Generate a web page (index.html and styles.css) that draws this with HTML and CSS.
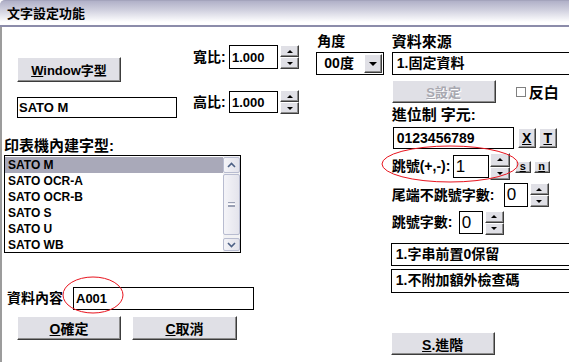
FILE: index.html
```html
<!DOCTYPE html>
<html lang="zh-Hant">
<head>
    <meta charset="UTF-8">
    <meta name="viewport" content="width=device-width, initial-scale=1.0">
    <title>文字設定功能</title>
    <link rel="stylesheet" href="styles.css">
</head>
<body>
    <div class="window">
        <div class="titlebar">文字設定功能</div>
        <div class="client">
            <div class="col-left">
                <div class="top-row">
                    <div class="font-col">
                        <button class="btn btn-window"><u>W</u>indow字型</button>
                        <div class="textbox tb-font">SATO M</div>
                    </div>
                    <div class="ratio-col">
                        <div class="ratio-row">
                            <span class="label ratio-label">寬比:</span>
                            <div class="textbox tb-ratio">1.000</div>
                            <div class="spin"><span class="spin-btn up"></span><span class="spin-btn down"></span></div>
                        </div>
                        <div class="ratio-row second">
                            <span class="label ratio-label">高比:</span>
                            <div class="textbox tb-ratio">1.000</div>
                            <div class="spin"><span class="spin-btn up"></span><span class="spin-btn down"></span></div>
                        </div>
                    </div>
                </div>

                <div class="label label-big list-label">印表機內建字型:</div>
                <div class="listbox">
                    <div class="list-items">
                        <div class="item selected">SATO M</div>
                        <div class="item">SATO OCR-A</div>
                        <div class="item">SATO OCR-B</div>
                        <div class="item">SATO S</div>
                        <div class="item">SATO U</div>
                        <div class="item">SATO WB</div>
                    </div>
                    <div class="scrollbar">
                        <span class="sb-btn">
                            <svg width="9" height="6" viewBox="0 0 9 6"><polyline points="1,5 4.5,1.5 8,5" fill="none" stroke="#4d6185" stroke-width="1.6"/></svg>
                        </span>
                        <span class="sb-thumb"><span class="grip"></span></span>
                        <span class="sb-track"></span>
                        <span class="sb-btn">
                            <svg width="9" height="6" viewBox="0 0 9 6"><polyline points="1,1 4.5,4.5 8,1" fill="none" stroke="#4d6185" stroke-width="1.6"/></svg>
                        </span>
                    </div>
                </div>

                <div class="data-row">
                    <span class="label data-label">資料內容</span>
                    <div class="textbox tb-data">A001</div>
                </div>
                <div class="action-row">
                    <button class="btn btn-action btn-ok"><u>O</u>確定</button>
                    <button class="btn btn-action btn-cancel"><u>C</u>取消</button>
                </div>
            </div>

            <div class="col-angle">
                <div class="label angle-label">角度</div>
                <div class="select">
                    <span class="select-text">00度</span>
                    <span class="select-arrow"></span>
                </div>
            </div>

            <div class="col-right">
                <div class="label label-big">資料來源</div>
                <div class="combo">1.固定資料</div>
                <div class="flex-row setting-row">
                    <button class="btn btn-disabled"><u>S</u>設定</button>
                    <span class="checkbox"></span>
                    <span class="check-label">反白</span>
                </div>
                <div class="label label-big carry-label">進位制 字元:</div>
                <div class="flex-row chars-row">
                    <div class="textbox tb-chars">0123456789</div>
                    <button class="btn btn-mini btn-x"><u>X</u></button>
                    <button class="btn btn-mini btn-t"><u>T</u></button>
                </div>
                <div class="flex-row step-row">
                    <span class="label step-label">跳號(+,-):</span>
                    <div class="textbox tb-num tb-step">1</div>
                    <div class="spin spin-tall"><span class="spin-btn up"></span><span class="spin-btn down"></span></div>
                    <button class="btn btn-tiny btn-s"><u>s</u></button>
                    <button class="btn btn-tiny btn-n"><u>n</u></button>
                </div>
                <div class="flex-row tail-row">
                    <span class="label tail-label">尾端不跳號字數:</span>
                    <div class="textbox tb-num tb-small">0</div>
                    <div class="spin"><span class="spin-btn up"></span><span class="spin-btn down"></span></div>
                </div>
                <div class="flex-row count-row">
                    <span class="label count-label">跳號字數:</span>
                    <div class="textbox tb-num tb-small">0</div>
                    <div class="spin"><span class="spin-btn up"></span><span class="spin-btn down"></span></div>
                </div>
                <div class="combo combo-lead">1.字串前置0保留</div>
                <div class="combo combo-check">1.不附加額外檢查碼</div>
                <button class="btn btn-action btn-advanced"><u>S</u>.進階</button>
            </div>
        </div>

        <svg class="marks" width="580" height="362" viewBox="0 0 580 362">
            <ellipse cx="450" cy="164" rx="68" ry="18" fill="none" stroke="#e8141e" stroke-width="1"/>
            <ellipse cx="93" cy="295" rx="30" ry="18" fill="none" stroke="#e8141e" stroke-width="1"/>
        </svg>
    </div>
</body>
</html>
```

FILE: styles.css
```css
* {
    box-sizing: border-box;
}

body {
    margin: 0;
    background: #fff;
    font-family: "Liberation Sans", "Noto Sans CJK TC", sans-serif;
    font-weight: bold;
    color: #000;
    overflow: hidden;
}

.window {
    position: relative;
    width: 580px;
    height: 362px;
    overflow: hidden;
}

.titlebar {
    height: 27px;
    padding: 4px 0 0 7px;
    font-size: 13px;
    line-height: 17px;
    background: linear-gradient(#b0b0c8 0%, #d2d2e0 40%, #ffffff 88%);
    border-top: 1px solid #a4a4bc;
    border-bottom: 2px solid #8c8caa;
    border-top-left-radius: 5px;
}

.client {
    display: flex;
    height: 335px;
    border-left: 2px solid #9c9c9c;
}

/* shared controls */
.label {
    font-size: 14px;
    line-height: 17px;
    white-space: nowrap;
}

.label-big {
    font-size: 15px;
}

.btn {
    font: inherit;
    padding: 0;
    color: #000;
    background: #e0e0e6;
    border: 1px solid;
    border-color: #fff #3c3c3c #3c3c3c #fff;
    box-shadow: inset -1px -1px #8c8c8c;
}

.textbox {
    background: #fff;
    border: 1px solid #000;
    white-space: nowrap;
    overflow: hidden;
}

.spin {
    display: flex;
    flex-direction: column;
    width: 19px;
    height: 24px;
    margin-left: 2px;
}

.spin-btn {
    flex: 1;
    display: flex;
    align-items: center;
    justify-content: center;
    background: #e0e0e6;
    border: 1px solid;
    border-color: #fff #3c3c3c #3c3c3c #fff;
    box-shadow: inset -1px -1px #8c8c8c;
}

.spin-btn::before {
    content: "";
    border-left: 3px solid transparent;
    border-right: 3px solid transparent;
}

.spin-btn.up::before {
    border-bottom: 3px solid #000;
}

.spin-btn.down::before {
    border-top: 3px solid #000;
}

.flex-row {
    display: flex;
    align-items: center;
}

/* left column */
.col-left {
    width: 300px;
    margin-left: 2px;
}

.top-row {
    display: flex;
    height: 90px;
}

.font-col {
    width: 160px;
    margin-left: 13px;
    padding-top: 30px;
}

.btn-window {
    display: block;
    width: 104px;
    height: 25px;
    font-size: 13px;
}

.tb-font {
    margin-top: 15px;
    width: 160px;
    height: 21px;
    padding-left: 1px;
    font-size: 13px;
    line-height: 19px;
}

.ratio-col {
    margin-left: 16px;
    padding-top: 18px;
}

.ratio-row {
    display: flex;
    align-items: center;
    height: 24px;
}

.ratio-row.second {
    margin-top: 22px;
    height: 22px;
}

.ratio-label {
    width: 36px;
}

.tb-ratio {
    width: 49px;
    height: 100%;
    padding-left: 2px;
    font-size: 13px;
    display: flex;
    align-items: center;
}

.list-label {
    margin-top: 20px;
}

.listbox {
    display: flex;
    margin-top: 1px;
    width: 237px;
    height: 98px;
    border: 1px solid #000;
}

.list-items {
    flex: 1;
    padding-top: 1px;
}

.item {
    height: 16px;
    padding-left: 3px;
    font-size: 12px;
    line-height: 16px;
}

.item.selected {
    background: #a9a9b9;
}

.scrollbar {
    display: flex;
    flex-direction: column;
    width: 17px;
    padding: 1px 0;
    background: #f2f2f4;
}

.sb-btn {
    height: 16px;
    display: flex;
    align-items: center;
    justify-content: center;
    background: linear-gradient(90deg, #f4f4f8, #e2e2ea);
    border: 1px solid #b8bcd0;
    border-radius: 2px;
}

.sb-btn:last-child {
    height: 13px;
}

.sb-thumb {
    height: 61px;
    margin-top: 1px;
    display: flex;
    align-items: center;
    justify-content: center;
    background: linear-gradient(90deg, #f4f4f8, #e4e4ec);
    border: 1px solid #b8bcd0;
    border-radius: 2px;
}

.grip {
    width: 7px;
    height: 5px;
    border-top: 1px solid #9aa0b4;
    border-bottom: 1px solid #9aa0b4;
    background: linear-gradient(#fff 0 1px, #9aa0b4 1px 2px, transparent 2px);
    background-position: 0 1px;
    background-repeat: no-repeat;
}

.sb-track {
    flex: 1;
}

.data-row {
    display: flex;
    align-items: center;
    margin-top: 34px;
    height: 23px;
}

.data-label {
    width: 66px;
    margin-left: 3px;
}

.tb-data {
    width: 181px;
    height: 23px;
    padding-left: 2px;
    font-size: 13px;
    line-height: 21px;
}

.action-row {
    display: flex;
    margin-top: 6px;
}

.btn-action {
    width: 104px;
    height: 24px;
    font-size: 14px;
}

.btn-ok {
    margin-left: 13px;
}

.btn-cancel {
    margin-left: 11px;
    width: 105px;
}

/* angle column */
.col-angle {
    width: 68px;
    margin-left: 15px;
    padding-top: 6px;
}

.angle-label {
    padding-left: 1px;
}

.select {
    display: flex;
    margin-top: 2px;
    height: 23px;
    border: 1px solid #000;
    background: #fff;
}

.select-text {
    flex: 1;
    padding-left: 7px;
    font-size: 14px;
    line-height: 21px;
}

.select-arrow {
    width: 18px;
    margin: 1px;
    display: flex;
    align-items: center;
    justify-content: center;
    background: #e0e0e6;
    border: 1px solid;
    border-color: #fff #3c3c3c #3c3c3c #fff;
    box-shadow: inset -1px -1px #8c8c8c;
}

.select-arrow::before {
    content: "";
    border-left: 4px solid transparent;
    border-right: 4px solid transparent;
    border-top: 4px solid #000;
}

/* right column */
.col-right {
    width: 190px;
    margin-left: 8px;
    padding-top: 6px;
}

.combo {
    margin-top: 2px;
    width: 185px;
    height: 23px;
    padding-left: 4px;
    border: 1px solid #000;
    font-size: 14px;
    line-height: 21px;
    white-space: nowrap;
}

.setting-row {
    margin-top: 5px;
}

.btn-disabled {
    width: 104px;
    height: 23px;
    font-size: 13px;
    color: #a8a8b0;
    text-shadow: 1px 1px #fff;
}

.checkbox {
    width: 10px;
    height: 10px;
    margin-left: 20px;
    border: 1px solid #808080;
    background: #fff;
}

.check-label {
    margin-left: 3px;
    font-size: 15px;
}

.carry-label {
    margin-top: 3px;
}

.chars-row {
    margin-top: 4px;
    height: 22px;
}

.tb-chars {
    width: 121px;
    height: 22px;
    margin-left: 1px;
    padding-left: 3px;
    font-size: 14px;
    line-height: 20px;
}

.btn-mini {
    width: 18px;
    height: 20px;
    font-size: 14px;
}

.btn-x {
    margin-left: 4px;
}

.btn-t {
    margin-left: 3px;
}

.step-row {
    margin-top: 4px;
    height: 27px;
}

.step-label {
    width: 61px;
}

.tb-num {
    height: 23px;
    padding-left: 2px;
    font-size: 17px;
    font-weight: normal;
    line-height: 21px;
}

.tb-step {
    width: 36px;
}

.spin-tall {
    height: 27px;
    width: 20px;
    margin-left: 1px;
}

.btn-tiny {
    width: 16px;
    height: 12px;
    font-size: 11px;
    line-height: 9px;
}

.btn-s {
    margin-left: 5px;
}

.btn-n {
    margin-left: 3px;
}

.tail-row {
    margin-top: 3px;
    height: 24px;
}

.tail-label {
    width: 112px;
}

.tb-small {
    width: 24px;
    height: 24px;
}

.count-row {
    margin-top: 4px;
    height: 23px;
}

.count-label {
    width: 67px;
}

.count-row .tb-small {
    height: 23px;
}

.combo-lead {
    margin-top: 9px;
    margin-left: -1px;
}

.combo-check {
    margin-top: 3px;
    margin-left: -1px;
    height: 24px;
}

.btn-advanced {
    display: block;
    margin-top: 39px;
    margin-left: -1px;
    height: 23px;
}

.marks {
    position: absolute;
    left: 0;
    top: 0;
    pointer-events: none;
}
```
